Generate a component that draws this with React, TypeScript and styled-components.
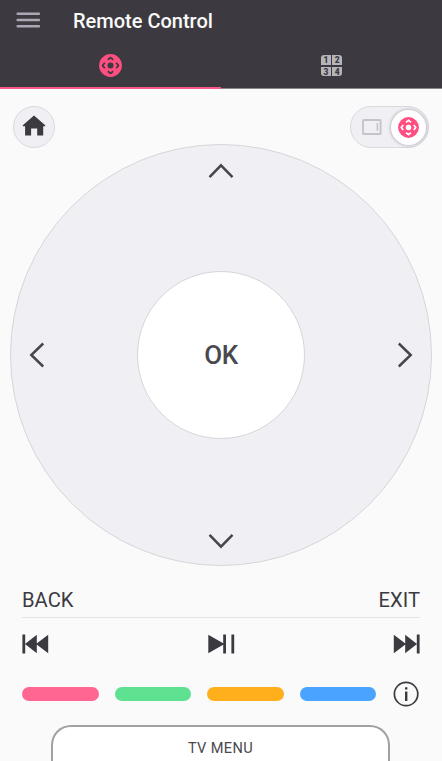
import React from 'react';
import styled, { createGlobalStyle } from 'styled-components';

const GlobalStyle = createGlobalStyle`
  *, *::before, *::after { box-sizing: border-box; }
  body { margin: 0; background: #fafafa; font-family: Roboto, sans-serif; color: #3c3a41; }
  button { font: inherit; color: inherit; border: 0; padding: 0; background: none; }
  svg { display: block; flex: none; }
`;

const Screen = styled.main`
  width: 442px;
  height: 761px;
  overflow: hidden;
  display: flex;
  flex-direction: column;
  background: #fafafa;
`;

const Header = styled.header`
  flex: none;
  height: 89px;
  background: linear-gradient(#3c3a40 88px, #88868a 88px);
`;

const TitleBar = styled.div`
  height: 42px;
  display: flex;
  align-items: flex-start;
  padding-left: 16px;
`;

const MenuButton = styled.button`
  width: 57px;
  padding-top: 12px;
`;

const Title = styled.h1`
  margin: 0;
  padding-top: 9px;
  font-size: 20px;
  font-weight: 500;
  line-height: 24px;
  letter-spacing: 0;
  color: #fafafa;
`;

const Tabs = styled.nav`
  height: 47px;
  display: grid;
  grid-template-columns: 1fr 1fr;
`;

const Tab = styled.button<{ $active?: boolean }>`
  display: flex;
  justify-content: center;
  padding-top: 12px;
  border-bottom: 2px solid ${(p) => (p.$active ? '#f9598a' : 'transparent')};
`;

const Toolbar = styled.div`
  flex: none;
  display: flex;
  justify-content: space-between;
  padding: 17px 13px 0 12.5px;
`;

const HomeButton = styled.button`
  width: 42px;
  height: 42px;
  border-radius: 21px;
  border: 1.5px solid #dadadd;
  background: #f0eff4;
  display: flex;
  justify-content: center;
  padding-top: 7px;
`;

const ModeSwitch = styled.div`
  width: 79px;
  height: 42px;
  border-radius: 21px;
  border: 1.5px solid #dadadd;
  background: #f0eff4;
  display: flex;
  align-items: center;
  justify-content: space-between;
  padding: 0 2px 0 11px;
`;

const Knob = styled.span`
  width: 35px;
  height: 35px;
  border-radius: 50%;
  background: #fff;
  box-shadow: 0 0 3px 1px rgba(60, 58, 70, 0.28);
  display: flex;
  align-items: center;
  justify-content: center;
`;

const Dial = styled.section`
  flex: none;
  align-self: center;
  width: 422px;
  height: 422px;
  margin-top: -4px;
  border-radius: 50%;
  border: 1px solid #d6d6d9;
  background: #f0eff4;
  display: grid;
  grid-template-columns: 126px 168px 126px;
  grid-template-rows: 126px 168px 126px;
  grid-template-areas: '. up .' 'left ok right' '. down .';
`;

const Arrow = styled.button<{ $area: string; $pad: string }>`
  grid-area: ${(p) => p.$area};
  display: flex;
  align-items: ${(p) => (p.$area === 'up' ? 'flex-start' : p.$area === 'down' ? 'flex-end' : 'center')};
  justify-content: ${(p) => (p.$area === 'left' ? 'flex-start' : p.$area === 'right' ? 'flex-end' : 'center')};
  padding: ${(p) => p.$pad};
`;

const OkButton = styled.button`
  grid-area: ok;
  border-radius: 50%;
  border: 1px solid #d6d6d9;
  background: #fff;
  font-size: 26px;
  font-weight: 500;
  line-height: 30px;
  letter-spacing: -0.3px;
  color: #4a484f;
`;

const Controls = styled.section`
  flex: none;
  padding: 0 22px;
`;

const TextRow = styled.div`
  height: 52px;
  padding-top: 22px;
  display: flex;
  justify-content: space-between;
  border-bottom: 1.5px solid #e4e4e6;
`;

const TextButton = styled.button`
  height: 24px;
  font-size: 20.2px;
  line-height: 24px;
`;

const MediaRow = styled.div`
  height: 63px;
  padding-top: 16px;
  display: grid;
  grid-template-columns: 1fr auto 1fr;

  & > :last-child { justify-self: end; }
`;

const MediaButton = styled.button`
  height: 20px;
  align-self: start;
  justify-self: start;
`;

const ColorRow = styled.div`
  height: 26px;
  display: flex;
  align-items: center;
  gap: 16px;
`;

const ColorKey = styled.button<{ $color: string }>`
  flex: 1;
  height: 14px;
  border-radius: 7px;
  background: ${(p) => p.$color};
`;

const TvMenu = styled.button`
  flex: none;
  align-self: center;
  width: 339px;
  height: 54px;
  margin-top: 18px;
  margin-right: 1px;
  padding-top: 13px;
  border: 2px solid #a1a1a3;
  border-bottom: 0;
  border-radius: 20px 20px 0 0;
  background: #fff;
  color: #4a484e;
  font-size: 14.6px;
  letter-spacing: 0.35px;
  line-height: 17px;
  display: flex;
  justify-content: center;
`;

const PadIcon = ({ size, hole }: { size: number; hole: string }) => (
  <svg width={size} height={size} viewBox="0 0 23 23">
    <circle cx="11.5" cy="11.5" r="11.4" fill="#ff4f81" />
    <circle cx="11.5" cy="11.5" r="3" fill={hole} />
    <g fill="none" stroke={hole} strokeWidth="1.8">
      <path d="M8.8 5.8 11.5 3.6l2.7 2.2M8.8 17.2l2.7 2.2 2.7-2.2M5.8 8.8 3.6 11.5l2.2 2.7M17.2 8.8l2.2 2.7-2.2 2.7" />
    </g>
  </svg>
);

const DigitGrid = styled.span`
  width: 21px;
  height: 21px;
  margin-top: 1px;
  display: grid;
  grid-template-columns: 1fr 1fr;
  grid-template-rows: 1fr 1fr;
  gap: 1.5px;
  border-radius: 3px;
  overflow: hidden;
`;

const Digit = styled.span`
  background: #b5b4b9;
  color: #3c3a40;
  font-size: 8.5px;
  font-weight: 900;
  line-height: 10px;
  text-align: center;
`;

const chevrons = {
  up: { w: 26, h: 16, d: 'M1.5 14.2 13 2.3l11.5 11.9' },
  down: { w: 26, h: 16, d: 'M1.5 1.8 13 13.7 24.5 1.8' },
  left: { w: 16, h: 26, d: 'M14.2 1.5 2.3 13l11.9 11.5' },
  right: { w: 16, h: 26, d: 'M1.8 1.5 13.7 13 1.8 24.5' },
};

const Chevron = ({ dir }: { dir: keyof typeof chevrons }) => {
  const { w, h, d } = chevrons[dir];
  return (
    <svg width={w} height={h} viewBox={`0 0 ${w} ${h}`}>
      <path d={d} fill="none" stroke="#48464d" strokeWidth="2.5" />
    </svg>
  );
};

export default function App() {
  return (
    <Screen>
      <GlobalStyle />
      <Header>
        <TitleBar>
          <MenuButton aria-label="Menu">
            <svg width="25" height="16" viewBox="0 0 25 16">
              <path d="M1.7 1.8h21.2M1.7 8.1h21.2M1.7 14.2h21.2" stroke="#aaa8b5" strokeWidth="2.5" strokeLinecap="round" />
            </svg>
          </MenuButton>
          <Title>Remote Control</Title>
        </TitleBar>
        <Tabs>
          <Tab $active aria-label="Direction pad">
            <PadIcon size={23} hole="#3c3a40" />
          </Tab>
          <Tab aria-label="Number pad">
            <DigitGrid>
              {['1', '2', '3', '4'].map((n) => <Digit key={n}>{n}</Digit>)}
            </DigitGrid>
          </Tab>
        </Tabs>
      </Header>
      <Toolbar>
        <HomeButton aria-label="Home">
          <svg width="24" height="23" viewBox="0 0 24 23">
            <path d="M12 1.4 23.2 11.3V12.3H21.2V21.6H15.2V14.4H9.1V21.6H3.1V12.3H.8V11.3Z" fill="#3c3a41" />
          </svg>
        </HomeButton>
        <ModeSwitch>
          <svg width="20" height="16" viewBox="0 0 20 16">
            <rect x="1" y="1" width="17.6" height="14" rx="0.8" fill="none" stroke="#c4c3c8" strokeWidth="1.8" />
            <path d="M15.4 4v8" stroke="#c4c3c8" strokeWidth="1.6" />
          </svg>
          <Knob><PadIcon size={21} hole="#fff" /></Knob>
        </ModeSwitch>
      </Toolbar>
      <Dial>
        <Arrow $area="up" $pad="18px 0 0" aria-label="Up"><Chevron dir="up" /></Arrow>
        <Arrow $area="left" $pad="0 0 0 18px" aria-label="Left"><Chevron dir="left" /></Arrow>
        <OkButton>OK</OkButton>
        <Arrow $area="right" $pad="0 18px 0 0" aria-label="Right"><Chevron dir="right" /></Arrow>
        <Arrow $area="down" $pad="0 0 16px" aria-label="Down"><Chevron dir="down" /></Arrow>
      </Dial>
      <Controls>
        <TextRow>
          <TextButton>BACK</TextButton>
          <TextButton>EXIT</TextButton>
        </TextRow>
        <MediaRow>
          <MediaButton aria-label="Previous">
            <svg width="27" height="20" viewBox="0 0 27 20">
              <path d="M.4.5h2.8v19H.4ZM3 10 14.8.7v18.6ZM14 10 26.2.7v18.6Z" fill="#3c3a41" />
            </svg>
          </MediaButton>
          <MediaButton aria-label="Play or pause">
            <svg width="27" height="20" viewBox="0 0 27 20">
              <path d="M.3.7 15.2 9.3V.5H18v19h-2.8V10.7L.3 19.3ZM23.4.5h2.8v19h-2.8Z" fill="#3c3a41" />
            </svg>
          </MediaButton>
          <MediaButton aria-label="Next">
            <svg width="27" height="20" viewBox="0 0 27 20">
              <path d="M26.6.5h-2.8v19h2.8ZM24 10 12.2.7v18.6ZM13 10 .8.7v18.6Z" fill="#3c3a41" />
            </svg>
          </MediaButton>
        </MediaRow>
        <ColorRow>
          <ColorKey $color="#ff6692" aria-label="Red" />
          <ColorKey $color="#5fe192" aria-label="Green" />
          <ColorKey $color="#ffae1c" aria-label="Yellow" />
          <ColorKey $color="#4aa3ff" aria-label="Blue" />
          <svg width="28" height="26" viewBox="0 0 28 26">
            <circle cx="14.1" cy="13" r="11.7" fill="none" stroke="#3c3a41" strokeWidth="1.7" />
            <path d="M14.2 10.5v9.4M14.2 6.2v2.4" stroke="#3c3a41" strokeWidth="2.4" />
          </svg>
        </ColorRow>
      </Controls>
      <TvMenu>TV MENU</TvMenu>
    </Screen>
  );
}
